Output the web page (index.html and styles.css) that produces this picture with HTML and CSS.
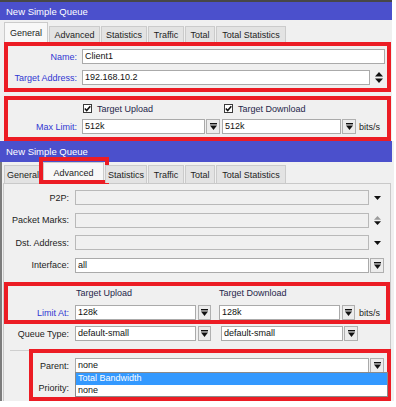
FILE: index.html
```html
<!DOCTYPE html>
<html>
<head>
<meta charset="utf-8">
<title>New Simple Queue</title>
<link rel="stylesheet" href="styles.css">
</head>
<body>
<div class="win win1">
  <div class="title">New Simple Queue</div>
  <div class="tabs">
    <div class="tab sel tw-44">General</div>
    <div class="tab tw-51">Advanced</div>
    <div class="tab tw-46">Statistics</div>
    <div class="tab tw-36">Traffic</div>
    <div class="tab tw-30">Total</div>
    <div class="tab tw-70">Total Statistics</div>
  </div>
  <div class="mark box1">
    <div class="row pr2">
      <span class="lbl blue">Name:</span>
      <div class="inp grow">Client1</div>
    </div>
    <div class="row">
      <span class="lbl blue">Target Address:</span>
      <div class="inp grow">192.168.10.2</div>
      <span class="side">
        <svg width="8" height="11" viewBox="0 0 8 11"><path d="M0 4.5L4 0L8 4.5Z"/><path d="M0 6.5L4 11L8 6.5Z"/></svg>
      </span>
    </div>
  </div>
  <div class="mark box2">
    <div class="checks">
      <span class="chk c1"><span class="cb"><svg width="7" height="7" viewBox="0 0 7 7"><path d="M0.8 3.4L2.7 5.5L6.3 1.2" fill="none" stroke="#111" stroke-width="1.5"/></svg></span>Target Upload</span>
      <span class="chk c2"><span class="cb"><svg width="7" height="7" viewBox="0 0 7 7"><path d="M0.8 3.4L2.7 5.5L6.3 1.2" fill="none" stroke="#111" stroke-width="1.5"/></svg></span>Target Download</span>
    </div>
    <div class="row">
      <span class="lbl blue">Max Limit:</span>
      <div class="inp iw-123">512k</div>
      <div class="btn bw-14 ml-1"><svg width="7" height="7" viewBox="0 0 7 7"><rect x="0" y="0" width="7" height="1.4"/><path d="M0 2.4H7L3.5 7Z"/></svg></div>
      <div class="inp iw-119 ml-2">512k</div>
      <div class="btn bw-14 ml-1"><svg width="7" height="7" viewBox="0 0 7 7"><rect x="0" y="0" width="7" height="1.4"/><path d="M0 2.4H7L3.5 7Z"/></svg></div>
      <span class="unit ml-3">bits/s</span>
    </div>
  </div>
</div>

<div class="win win2">
  <div class="title">New Simple Queue</div>
  <div class="body2">
    <div class="tabs">
      <div class="tab tw-38">General</div>
      <div class="tab sel tw-61">Advanced<span class="mark hl"></span></div>
      <div class="tab tw-42">Statistics</div>
      <div class="tab tw-36">Traffic</div>
      <div class="tab tw-30">Total</div>
      <div class="tab tw-70">Total Statistics</div>
    </div>
    <div class="page2">
      <div class="fields">
        <div class="row">
          <span class="lbl">P2P:</span>
          <div class="inp dis iw-294"></div>
          <span class="side">
            <svg width="7" height="4" viewBox="0 0 7 4"><path d="M0 0H7L3.5 4Z"/></svg>
          </span>
        </div>
        <div class="row">
          <span class="lbl">Packet Marks:</span>
          <div class="inp dis iw-294"></div>
          <span class="side">
            <svg width="7" height="9" viewBox="0 0 7 9"><path d="M0 3.8L3.5 0L7 3.8Z" fill="#9a9a9a"/><path d="M0 5.2H7L3.5 9Z"/></svg>
          </span>
        </div>
        <div class="row">
          <span class="lbl">Dst. Address:</span>
          <div class="inp dis iw-294"></div>
          <span class="side">
            <svg width="7" height="4" viewBox="0 0 7 4"><path d="M0 0H7L3.5 4Z"/></svg>
          </span>
        </div>
        <div class="row">
          <span class="lbl">Interface:</span>
          <div class="inp iw-294">all</div>
          <div class="btn bw-14 ml-1"><svg width="7" height="7" viewBox="0 0 7 7"><rect x="0" y="0" width="7" height="1.4"/><path d="M0 2.4H7L3.5 7Z"/></svg></div>
        </div>
      </div>

      <div class="mark box3">
        <div class="heads">
          <span class="head h1">Target Upload</span>
          <span class="head">Target Download</span>
        </div>
        <div class="row">
          <span class="lbl blue">Limit At:</span>
          <div class="inp iw-121">128k</div>
          <div class="btn bw-13 ml-2"><svg width="7" height="7" viewBox="0 0 7 7"><rect x="0" y="0" width="7" height="1.4"/><path d="M0 2.4H7L3.5 7Z"/></svg></div>
          <div class="inp iw-121 ml-8">128k</div>
          <div class="btn bw-13 ml-2"><svg width="7" height="7" viewBox="0 0 7 7"><rect x="0" y="0" width="7" height="1.4"/><path d="M0 2.4H7L3.5 7Z"/></svg></div>
          <span class="unit ml-4">bits/s</span>
        </div>
      </div>

      <div class="row qt">
        <span class="lbl">Queue Type:</span>
        <div class="inp iw-121">default-small</div>
        <div class="btn bw-13 ml-2"><svg width="7" height="7" viewBox="0 0 7 7"><rect x="0" y="0" width="7" height="1.4"/><path d="M0 2.4H7L3.5 7Z"/></svg></div>
        <div class="inp iw-122 ml-10">default-small</div>
        <div class="btn bw-14 ml-1"><svg width="7" height="7" viewBox="0 0 7 7"><rect x="0" y="0" width="7" height="1.4"/><path d="M0 2.4H7L3.5 7Z"/></svg></div>
      </div>

      <div class="sep"></div>

      <div class="mark box4">
        <div class="row">
          <span class="lbl">Parent:</span>
          <div class="combo">
            <div class="inp iw-294">none</div>
            <div class="btn bw-14 ml-1"><svg width="7" height="7" viewBox="0 0 7 7"><rect x="0" y="0" width="7" height="1.4"/><path d="M0 2.4H7L3.5 7Z"/></svg></div>
            <div class="dd">
              <div class="opt on">Total Bandwidth</div>
              <div class="opt">none</div>
            </div>
          </div>
        </div>
        <div class="row">
          <span class="lbl">Priority:</span>
          <div class="inp iw-294"></div>
        </div>
      </div>
    </div>
  </div>
</div>
</body>
</html>
```

FILE: styles.css
```css
* { box-sizing: border-box; }
html, body { margin: 0; padding: 0; }
body {
  width: 396px;
  height: 407px;
  overflow: hidden;
  background: #ffffff;
  font-family: "Liberation Sans", Arial, sans-serif;
  font-size: 9px;
  color: #1c1c1c;
}

.win { background: #f0f0f0; }
.win1 { width: 392px; height: 141px; }
.win2 { width: 394px; height: 260px; }

.title {
  background: #4b50cc;
  color: #ffffff;
  padding-left: 6px;
  display: flex;
  align-items: center;
  font-size: 9.5px;
}
.win1 .title { height: 20px; border-top: 2px solid #474747; }
.win2 .title { height: 21px; width: 392px; }

.tabs {
  display: flex;
  align-items: flex-end;
  gap: 1px;
  padding-left: 4px;
}
.win1 .tabs { height: 22px; }
.win2 .tabs { height: 21px; padding-left: 2px; }

.tab {
  position: relative;
  height: 16px;
  background: #e3e3e3;
  border: 1px solid #cbcbcb;
  border-bottom: none;
  display: flex;
  align-items: center;
  justify-content: center;
  white-space: nowrap;
  color: #1c1c1c;
}
.win2 .tab { height: 18px; }
.tab.sel { height: 20px; background: #f8f8f8; }
.win2 .tab.sel { height: 21px; }
.tw-30 { width: 30px; }
.tw-36 { width: 36px; }
.tw-38 { width: 38px; }
.tw-42 { width: 42px; }
.tw-44 { width: 44px; }
.tw-46 { width: 46px; }
.tw-51 { width: 51px; }
.tw-61 { width: 61px; }
.tw-70 { width: 70px; }

.mark { border: 4px solid #ec1c24; }

.hl {
  position: absolute;
  left: -5px;
  right: -6px;
  top: -6px;
  bottom: -1px;
}

.row {
  display: flex;
  align-items: center;
  height: 15px;
}
.pr2 { padding-right: 2px; }

.lbl {
  flex: none;
  text-align: right;
  white-space: nowrap;
  color: #1c1c1c;
}
.lbl.blue { color: #3037d2; }

.inp {
  flex: none;
  height: 15px;
  background: #ffffff;
  border: 1px solid #aaaaaa;
  padding-left: 2px;
  line-height: 13px;
  white-space: nowrap;
  overflow: hidden;
  color: #111111;
}
.inp.grow { flex: 1; }
.inp.dis { background: #f0f0f0; border-color: #b9b9b9; }
.iw-119 { width: 119px; }
.iw-121 { width: 121px; }
.iw-122 { width: 122px; }
.iw-123 { width: 123px; }
.iw-294 { width: 294px; }

.btn {
  flex: none;
  height: 15px;
  background: #ececec;
  border: 1px solid #b0b0b0;
  display: flex;
  align-items: center;
  justify-content: center;
}
.btn svg, .side svg { fill: #111111; display: block; }
.bw-13 { width: 13px; }
.bw-14 { width: 14px; }

.side {
  flex: none;
  width: 17px;
  display: flex;
  justify-content: center;
  align-items: center;
}

.unit { white-space: nowrap; color: #1c1c1c; }
.ml-1 { margin-left: 1px; }
.ml-2 { margin-left: 2px; }
.ml-3 { margin-left: 3px; }
.ml-4 { margin-left: 4px; }
.ml-8 { margin-left: 8px; }
.ml-10 { margin-left: 10px; }

/* window 1 boxes */
.box1 {
  margin-left: 4px;
  width: 387px;
  height: 50px;
  padding: 3px 0;
  display: flex;
  flex-direction: column;
  gap: 6px;
}
.box1 .lbl, .box2 .lbl { width: 69px; margin-right: 5px; }

.box2 {
  margin: 4px 0 0 4px;
  width: 387px;
  height: 45px;
  padding: 4px 0 3px;
  display: flex;
  flex-direction: column;
  gap: 6px;
}
.checks {
  display: flex;
  height: 9px;
  padding-left: 74px;
}
.chk {
  display: flex;
  align-items: center;
  gap: 5px;
  white-space: nowrap;
  color: #26264a;
}
.c1 { width: 140px; padding-left: 1px; }
.c2 { padding-left: 2px; }
.cb {
  width: 9px;
  height: 9px;
  background: #ffffff;
  border: 1px solid #3a3a3a;
  display: flex;
  align-items: center;
  justify-content: center;
}
.cb svg { display: block; }

/* window 2 */
.body2 {
  height: 239px;
  border-left: 2px solid #7c7c7c;
}
.page2 {
  margin-left: 1px;
  width: 388px;
  border: 1px solid #c9c9c9;
  border-bottom: none;
  padding-top: 6px;
  height: 218px;
}
.fields {
  display: flex;
  flex-direction: column;
  gap: 7.5px;
}
.page2 .lbl { width: 65px; margin-right: 6px; }

.box3 {
  margin-top: 9.5px;
  width: 386px;
  height: 42px;
  padding-top: 1px;
  display: flex;
  flex-direction: column;
  gap: 6px;
}
.box3 .lbl { width: 61px; }
.heads {
  display: flex;
  align-items: center;
  height: 12px;
  padding-left: 68px;
  color: #26264a;
  white-space: nowrap;
}
.h1 { width: 143px; }

.qt { margin-top: 2px; }

.sep {
  margin: 9px 0 0 6px;
  height: 1px;
  background: #cfcfcf;
}

.box4 {
  position: relative;
  margin: -2px 0 0 25px;
  width: 362px;
  height: 52px;
  padding-top: 5px;
  display: flex;
  flex-direction: column;
  gap: 7px;
}
.box4 .lbl { width: 36px; }

.combo {
  position: relative;
  display: flex;
  align-items: center;
}
.dd {
  position: absolute;
  left: 0;
  top: 14px;
  width: 313px;
  height: 25px;
  background: #ffffff;
  border: 1px solid #8a8a8a;
  z-index: 2;
}
.opt {
  height: 11.5px;
  line-height: 11.5px;
  padding-left: 2px;
  color: #111111;
  white-space: nowrap;
}
.opt.on { background: #3399ff; color: #ffffff; }
```
